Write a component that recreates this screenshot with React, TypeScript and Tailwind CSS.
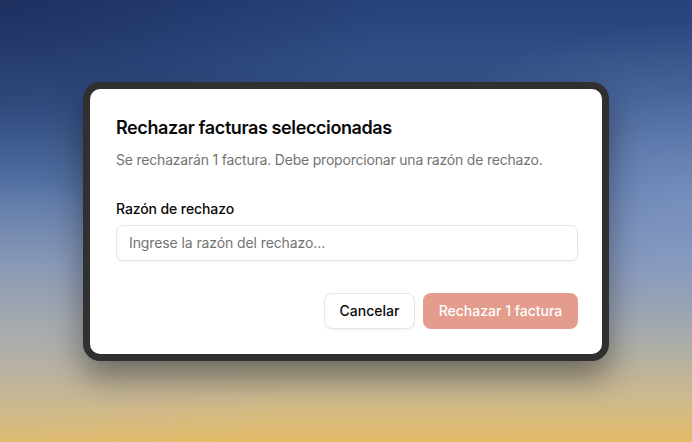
export default function App() {
  return (
    <div
      className="relative flex h-[442px] w-[692px] items-center justify-center overflow-hidden bg-[linear-gradient(180deg,#27427a_0%,#37568c_22%,#5673a6_42%,#8294b6_60%,#a9aba8_76%,#cdb98e_90%,#e4bc68_100%)]"
      style={{ fontFamily: "Inter, 'Liberation Sans', sans-serif" }}
    >
      {/* lighting overlays */}
      <div className="pointer-events-none absolute inset-0 bg-[radial-gradient(ellipse_55%_45%_at_0%_0%,rgba(20,30,70,0.5),transparent)]" />
      <div className="pointer-events-none absolute inset-0 bg-[radial-gradient(ellipse_45%_40%_at_100%_45%,rgba(150,170,215,0.45),transparent)]" />
      <div className="pointer-events-none absolute inset-0 bg-[radial-gradient(ellipse_45%_35%_at_0%_75%,rgba(170,175,185,0.3),transparent)]" />

      {/* dialog frame */}
      <div className="relative rounded-[17px] bg-[#303030] p-[7px] shadow-[0_16px_32px_rgba(0,0,0,0.4)]">
        <div className="flex w-[512px] flex-col rounded-[10px] bg-white pb-[25px] pl-[26px] pr-6 pt-[25px]">
          <div className="flex flex-col gap-2">
            <h2 className="text-lg font-semibold leading-7 tracking-[-0.4px] text-[#0a0a0a]">
              Rechazar facturas seleccionadas
            </h2>
            <p className="text-sm leading-5 tracking-[-0.2px] text-[#737373]">
              Se rechazarán 1 factura. Debe proporcionar una razón de rechazo.
            </p>
          </div>

          <div className="mt-8 flex flex-col gap-[9px]">
            <label className="text-sm font-medium leading-none tracking-[-0.1px] text-[#0a0a0a]">
              Razón de rechazo
            </label>
            <input
              placeholder="Ingrese la razón del rechazo..."
              className="h-9 w-full rounded-[7px] border border-[#e5e5e5] bg-white px-3 text-sm tracking-[-0.1px] text-[#0a0a0a] shadow-[0_1px_2px_rgba(0,0,0,0.05)] outline-none placeholder:text-[#737373]"
            />
          </div>

          <div className="mt-8 flex justify-end gap-2">
            <button className="h-9 w-[91px] rounded-lg border border-[#e5e5e5] bg-white text-sm font-medium text-[#0a0a0a] shadow-[0_1px_2px_rgba(0,0,0,0.05)]">
              Cancelar
            </button>
            <button className="h-9 w-[155px] rounded-lg bg-[#e49c8d] text-sm font-medium text-white">
              Rechazar 1 factura
            </button>
          </div>
        </div>
      </div>
    </div>
  );
}
